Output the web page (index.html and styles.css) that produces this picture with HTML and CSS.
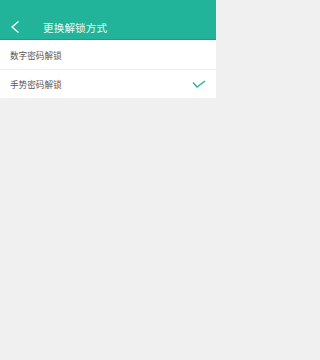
FILE: index.html
```html
<!DOCTYPE html>
<html lang="zh">
<head>
<meta charset="utf-8">
<link rel="stylesheet" href="styles.css">
</head>
<body>
<div class="screen">
  <div class="header">
    <svg class="back" width="10" height="14" viewBox="0 0 10 14"><path d="M8.5 1.5 L2 7 L8.5 12.5" fill="none" stroke="#fff" stroke-width="1.3"/></svg>
    <span class="title">更换解锁方式</span>
  </div>
  <div class="list">
    <div class="row"><span class="label">数字密码解锁</span></div>
    <div class="row"><span class="label">手势密码解锁</span>
      <svg class="check" width="14" height="9" viewBox="0 0 14 9"><path d="M1 2.5 L5 7 L13 1" fill="none" stroke="#21b39a" stroke-width="1.3"/></svg>
    </div>
  </div>
</div>
</body>
</html>
```
FILE: styles.css
```css
html, body { margin: 0; padding: 0; }
body {
  background: #f0f0f0;
  font-family: "Noto Sans CJK SC", "Noto Sans", sans-serif;
}
.screen {
  width: 216px;
  min-height: 360px;
  background: #f0f0f0;
}
.header {
  background: #22b49a;
  border-bottom: 1px solid #1c9d86;
  display: flex;
  align-items: center;
  padding-top: 15px;
  height: 24px;
}
.back { margin-left: 10px; flex: none; }
.title {
  margin-left: 23px;
  color: #eaf8f5;
  font-size: 10.6px;
  letter-spacing: 0.1px;
}
.list { background: #fff; }
.row {
  height: 29px;
  display: flex;
  align-items: center;
  justify-content: space-between;
  padding: 0 10px;
}
.row + .row { border-top: 1px solid #eeeeee; height: 28px; }
.label { color: #555; font-size: 8.6px; }
```
